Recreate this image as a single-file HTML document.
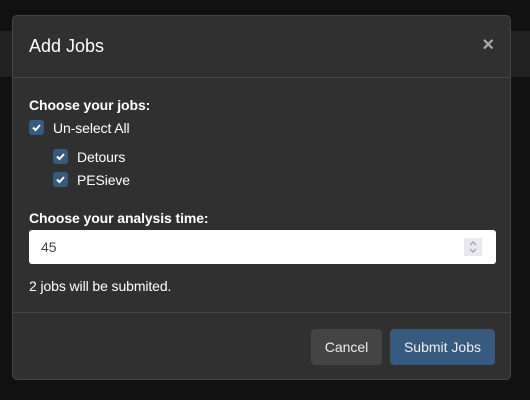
<!DOCTYPE html><html><head><style>
body{margin:0;width:530px;height:400px;background:#111;font-family:"Liberation Sans",sans-serif;color:#fff;position:relative;overflow:hidden}
.band{position:absolute;left:0;right:0;top:31px;height:46px;background:#222}
.m{position:absolute;left:12px;top:15px;width:499px;height:365px;background:#303030;border:1px solid #444;border-radius:5px;box-sizing:border-box}
.hd{position:absolute;left:0;right:0;top:0;height:61px;border-bottom:1px solid #464646}
.t{position:absolute;left:16px;top:20px;font-size:18px}
.x{position:absolute;right:16px;top:18px;font-size:20px;color:#aaa;font-weight:bold}
.a{position:absolute;font-size:14px;letter-spacing:-0.1px}
.cb{position:absolute;width:15px;height:15px;background:#375a7f;border-radius:3px}
.cb svg{position:absolute;left:3px;top:3px}
.in{position:absolute;left:16px;top:214px;width:467px;height:34px;background:#fff;border-radius:3px;color:#444;font-size:14px;box-sizing:border-box;padding:9px 12px}
.sp{position:absolute;right:14px;top:8px;width:18px;height:18px;background:#e8e8ee}
.ft{position:absolute;left:0;right:0;top:296px;border-top:1px solid #464646}
.b{position:absolute;top:313px;height:36px;border-radius:4px;font-size:14px;line-height:36px;text-align:center;color:#eee}
</style></head><body>
<div class="band"></div>
<div class="m">
<div class="hd"><div class="t">Add Jobs</div><div class="x">×</div></div>
<div class="a" style="left:16px;top:81px;font-weight:bold">Choose your jobs:</div>
<div class="cb" style="left:16px;top:104px"><svg width="9" height="9" viewBox="0 0 9 9"><path d="M1 4.5L3.5 7L8 2" stroke="#fff" stroke-width="2" fill="none"/></svg></div>
<div class="a" style="left:40px;top:104px">Un-select All</div>
<div class="cb" style="left:40px;top:133px"><svg width="9" height="9" viewBox="0 0 9 9"><path d="M1 4.5L3.5 7L8 2" stroke="#fff" stroke-width="2" fill="none"/></svg></div>
<div class="a" style="left:64px;top:133px">Detours</div>
<div class="cb" style="left:40px;top:156px"><svg width="9" height="9" viewBox="0 0 9 9"><path d="M1 4.5L3.5 7L8 2" stroke="#fff" stroke-width="2" fill="none"/></svg></div>
<div class="a" style="left:64px;top:156px">PESieve</div>
<div class="a" style="left:16px;top:194px;font-weight:bold">Choose your analysis time:</div>
<div class="in">45<div class="sp"><svg width="18" height="18" viewBox="0 0 18 18"><path d="M6 7L9 4L12 7M6 11L9 14L12 11" stroke="#999" stroke-width="1.2" fill="none"/></svg></div></div>
<div class="a" style="left:16px;top:262px">2 jobs will be submited.</div>
<div class="ft"></div>
<div class="b" style="left:298px;width:71px;background:#444">Cancel</div>
<div class="b" style="left:377px;width:105px;background:#375a7f">Submit Jobs</div>
</div>
</body></html>
